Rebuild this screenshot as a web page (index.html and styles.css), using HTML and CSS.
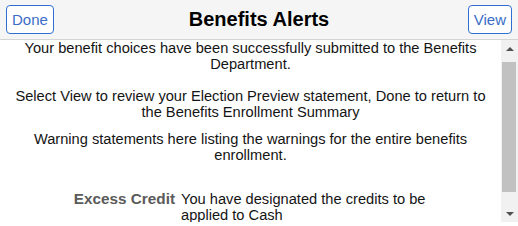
FILE: index.html
```html
<!DOCTYPE html>
<html lang="en">
<head>
  <meta charset="UTF-8">
  <title>Benefits Alerts</title>
  <link rel="stylesheet" href="styles.css">
</head>
<body>
  <div class="cabecalho">
    <div class="lado esquerda"><button class="botao">Done</button></div>
    <h1 class="titulo">Benefits Alerts</h1>
    <div class="lado direita"><button class="botao">View</button></div>
  </div>
  <div class="area">
    <div class="conteudo">
      <div class="mensagem">
        Your benefit choices have been successfully submitted to the Benefits Department.<br><br>
        Select View to review your Election Preview statement, Done to return to the Benefits Enrollment Summary
      </div>
      <div class="aviso">Warning statements here listing the warnings for the entire benefits enrollment.</div>
      <div class="linha">
        <span class="rotulo">Excess Credit</span>
        <span class="valor">You have designated the credits to be applied to Cash</span>
      </div>
    </div>
    <div class="barra">
      <div class="seta"><svg viewBox="0 0 8 4" width="8" height="4"><path d="M0 4L4 0L8 4Z" fill="#505050"/></svg></div>
      <div class="trilho"><div class="polegar"></div></div>
      <div class="seta"><svg viewBox="0 0 8 4" width="8" height="4"><path d="M0 0L8 0L4 4Z" fill="#505050"/></svg></div>
    </div>
  </div>
</body>
</html>
```

FILE: styles.css
```css
body {
  margin: 0;
  font-family: 'Liberation Sans', Arial, sans-serif;
  color: #141414;
  background: #fff;
  overflow: hidden;
}
.cabecalho {
  display: grid;
  grid-template-columns: 1fr auto 1fr;
  align-items: center;
  height: 39px;
  padding: 0 6px;
  background: #f5f5f5;
  border-bottom: 1px solid #d4d4d4;
}
.lado { display: flex; }
.direita { justify-content: flex-end; }
.titulo {
  margin: 0;
  font-size: 20px;
  font-weight: 700;
  color: #000;
}
.botao {
  height: 29px;
  padding: 0 5px;
  border: 1px solid #2f6fd4;
  border-radius: 4px;
  background: #fff;
  color: #3a6ec6;
  font-family: inherit;
  font-size: 15px;
  cursor: pointer;
}
.area {
  display: flex;
  height: 182px;
}
.conteudo {
  flex: 1;
  overflow: hidden;
  padding: 0 10px;
  font-size: 14.65px;
  line-height: 16px;
  text-align: center;
}
.aviso {
  margin-top: 11px;
}
.linha {
  display: flex;
  gap: 6px;
  margin-top: 28px;
  text-align: left;
}
.rotulo {
  width: 165px;
  flex-shrink: 0;
  text-align: right;
  font-size: 15.3px;
  font-weight: 700;
  color: #5a5a5a;
}
.valor {
  width: 255px;
}
.barra {
  width: 17px;
  display: flex;
  flex-direction: column;
  background: #f1f1f1;
}
.seta {
  height: 17px;
  display: flex;
  align-items: center;
  justify-content: center;
}
.trilho {
  flex: 1;
  padding-top: 5px;
}
.polegar {
  height: 130px;
  margin: 0 2px 0 1px;
  background: #c1c1c1;
}
```
